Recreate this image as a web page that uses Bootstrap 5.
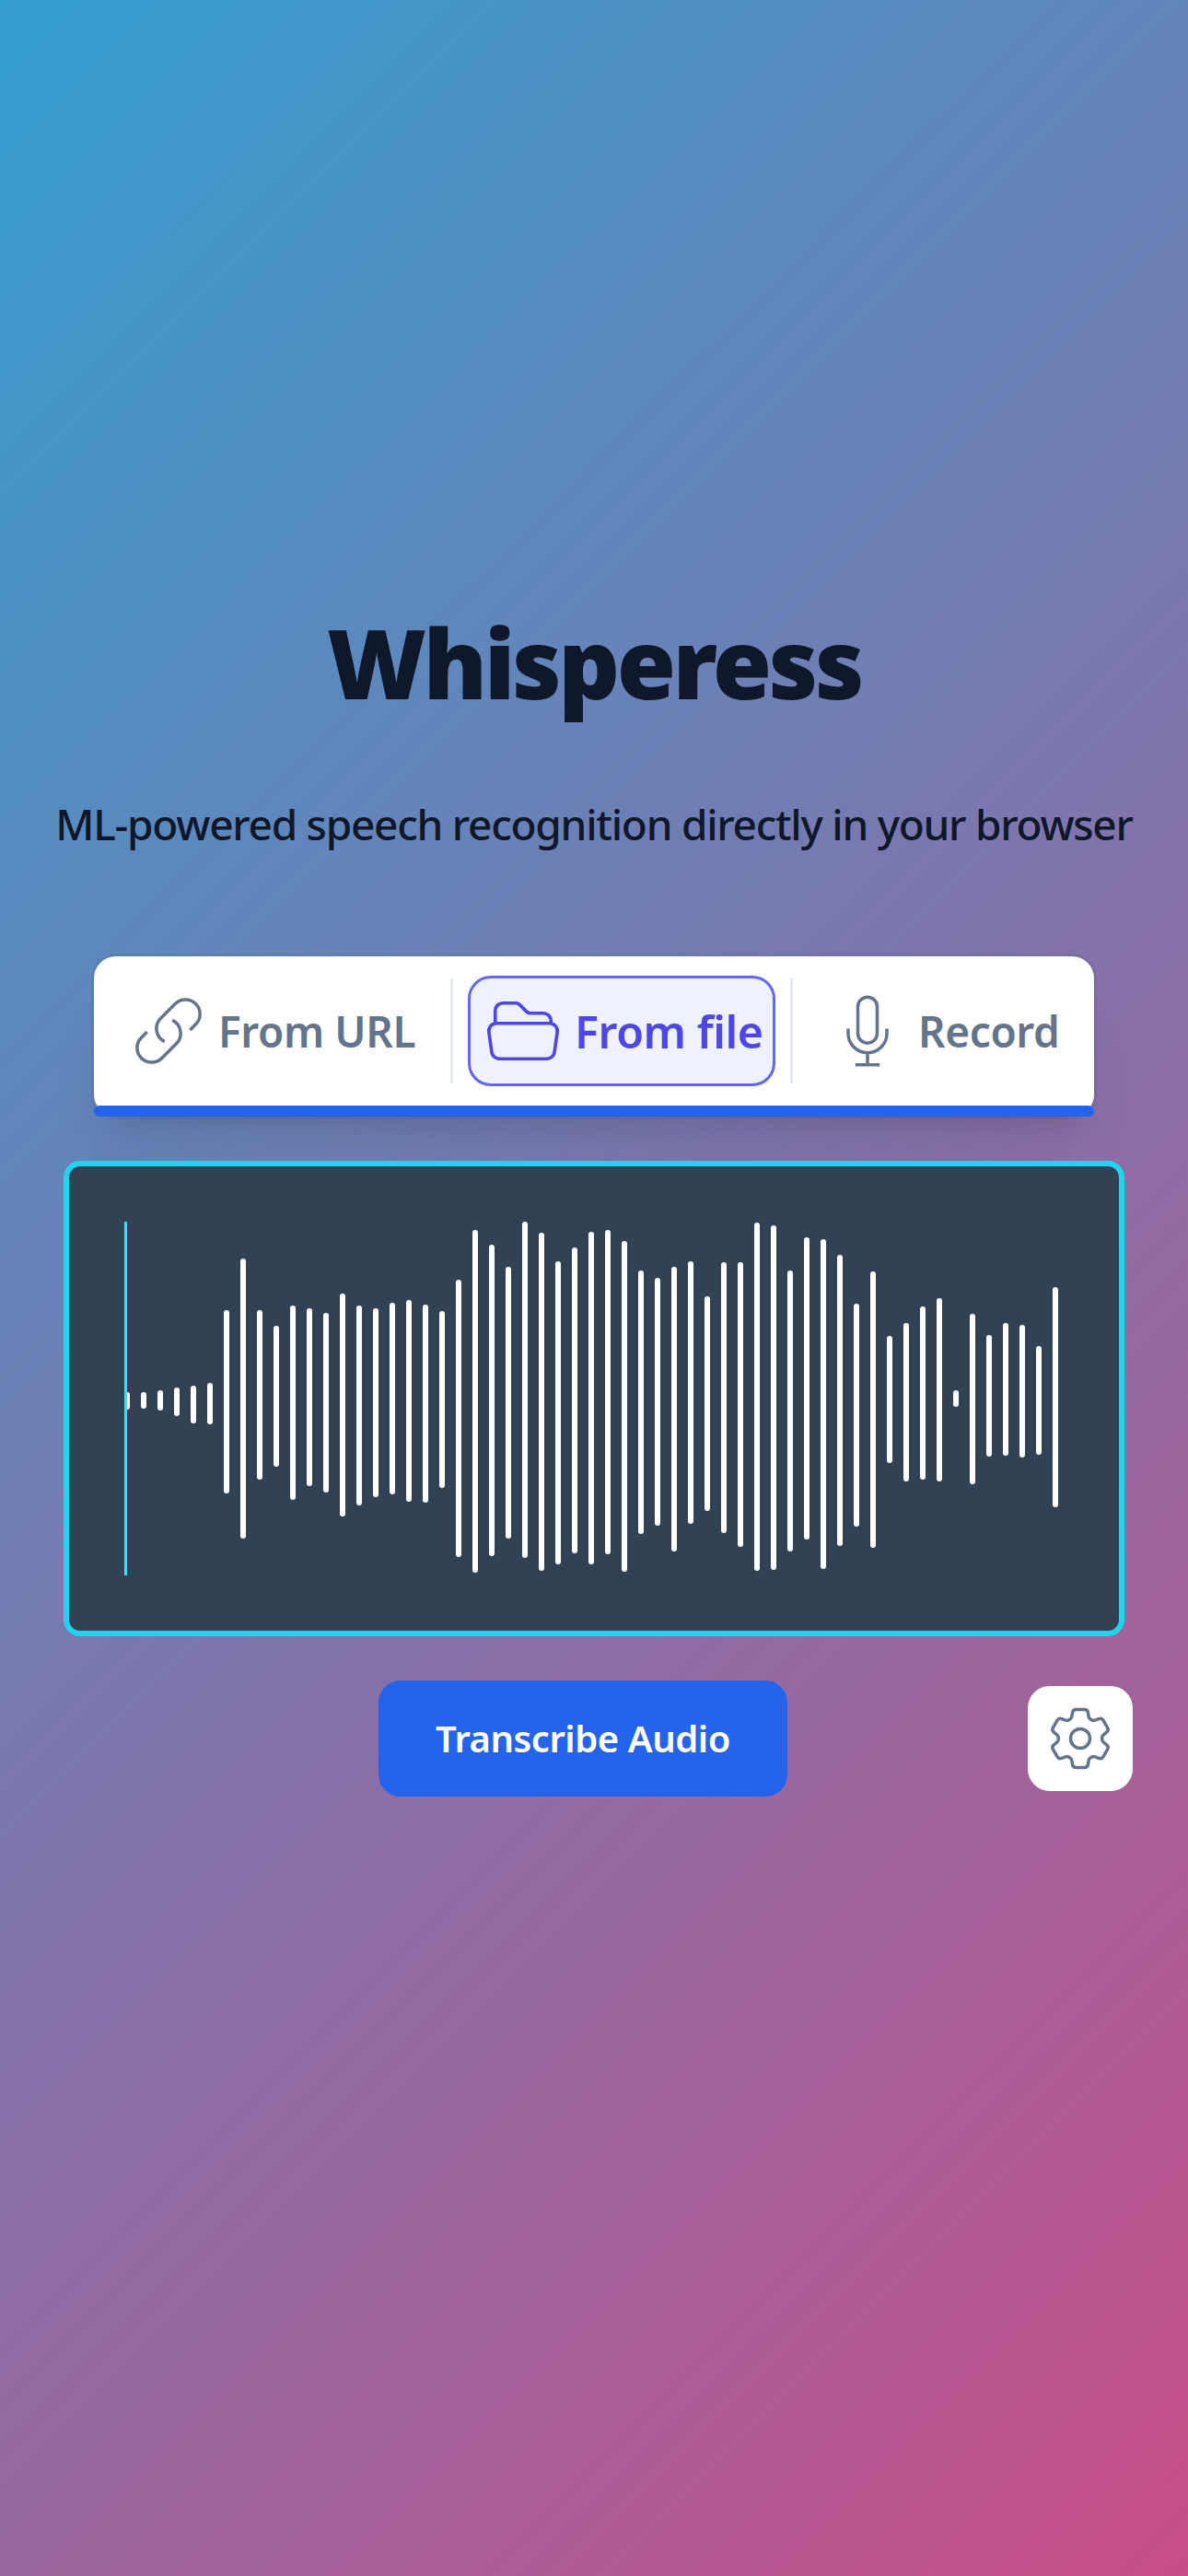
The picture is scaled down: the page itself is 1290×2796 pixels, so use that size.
<!DOCTYPE html>
<html lang="en">
<head>
<meta charset="utf-8">
<meta name="viewport" content="width=device-width, initial-scale=1">
<title>Whisperess</title>
<link rel="stylesheet" href="https://cdn.jsdelivr.net/npm/bootstrap@5.3.0/dist/css/bootstrap.min.css">
<style>
  body {
    font-family: "Segoe UI", "Noto Sans", "Open Sans", sans-serif;
    color: #0f172a;
    background: linear-gradient(135deg, #349fd1, #c84d88) no-repeat;
    min-height: 2796px;
  }
  .page { padding-top: 664px; }
  .app-title { font-size: 104px; font-weight: 900; line-height: 110px; letter-spacing: -3.5px; margin-bottom: 84px; }
  .tagline { font-size: 46px; font-weight: 500; line-height: 72px; letter-spacing: -1.27px; margin-bottom: 108px; }
  .source-bar {
    width: 1086px; height: 174px; padding: 24px 0 36px; border-radius: 24px;
    box-shadow: 0 0 0 3px rgba(51,65,85,.1), 0 60px 75px -15px rgba(0,0,0,.06), 0 24px 30px -18px rgba(0,0,0,.1);
  }
  .progress-line { height: 12px; border-radius: 6px; background: #2563eb; }
  .source-tab { color: #64748b; font-size: 46px; font-weight: 600; letter-spacing: -.4px; line-height: 1; }
  .tab-url { width: 387px; padding-left: 39px; gap: 12px; }
  .tab-file { width: 366px; }
  .tab-record { width: 327px; padding-left: 39px; gap: 13px; }
  .tab-pill {
    width: 334px; height: 120px; padding-left: 13px; gap: 12px; border: 3px solid #6366f1;
    border-radius: 25px; background: #eef2ff; color: #4f46e5; font-size: 48.5px; letter-spacing: -.5px;
  }
  .separator { width: 3px; background: #e2e8f0; }
  .glyph { width: 84px; height: 84px; flex: none; fill: none; stroke: currentColor; stroke-width: 1; }
  .tab-pill .glyph { width: 88px; height: 88px; }
  .wave-panel {
    width: 1152px; height: 516px; margin: 48px 0; padding: 60px; border: 6px solid #22d3ee;
    border-radius: 18px; background: #334155;
  }
  .wave { display: block; width: 1020px; height: 384px; }
  .action-row { margin: 0 60px 0 36px; }
  .btn-transcribe {
    --bs-btn-color: #fff; --bs-btn-bg: #2563eb; --bs-btn-hover-color: #fff; --bs-btn-hover-bg: #1d4ed8;
    width: 444px; height: 126px; padding: 0; border: 0; border-radius: 24px;
    font-size: 40px; font-weight: 600; letter-spacing: -.45px;
  }
  .btn-settings { width: 114px; height: 114px; border: 0; border-radius: 24px; --bs-btn-bg: #fff; --bs-btn-color: #64748b; }
</style>
</head>
<body>
<main class="page d-flex flex-column align-items-center text-center text-nowrap">
  <h1 class="app-title">Whisperess</h1>
  <h2 class="tagline">ML-powered speech recognition directly in your browser</h2>

  <nav class="source-bar bg-white position-relative d-flex">
    <div class="source-tab tab-url d-flex align-items-center">
      <svg class="glyph" viewBox="0 0 24 24"><path d="M13.19 8.688a4.5 4.5 0 011.242 7.244l-4.5 4.5a4.5 4.5 0 01-6.364-6.364l1.757-1.757m13.35-.622l1.757-1.757a4.5 4.5 0 00-6.364-6.364l-4.5 4.5a4.5 4.5 0 001.242 7.244"/></svg>
      <span>From URL</span>
    </div>
    <div class="separator"></div>
    <div class="tab-file d-flex align-items-center justify-content-center">
      <div class="source-tab tab-pill d-flex flex-shrink-0 align-items-center">
        <svg class="glyph" viewBox="0 0 24 24"><path d="M3.75 9.776c.112-.017.227-.026.344-.026h15.812c.117 0 .232.009.344.026m-16.5 0a2.25 2.25 0 00-1.883 2.542l.857 6a2.25 2.25 0 002.227 1.932H19.05a2.25 2.25 0 002.227-1.932l.857-6a2.25 2.25 0 00-1.883-2.542m-16.5 0V6A2.25 2.25 0 016 3.75h3.879a1.5 1.5 0 011.06.44l2.122 2.12a1.5 1.5 0 001.06.44H18A2.25 2.25 0 0120.25 9v.776"/></svg>
        <span>From file</span>
      </div>
    </div>
    <div class="separator"></div>
    <div class="source-tab tab-record d-flex align-items-center">
      <svg class="glyph" viewBox="0 0 24 24"><path d="M12 18.75a6 6 0 006-6v-1.5m-6 7.5a6 6 0 01-6-6v-1.5m6 7.5v3.75m-3.75 0h7.5M12 15.75a3 3 0 01-3-3V4.5a3 3 0 116 0v8.25a3 3 0 01-3 3z"/></svg>
      <span>Record</span>
    </div>
    <div class="progress-line position-absolute start-0 bottom-0 w-100"></div>
  </nav>

  <section class="wave-panel position-relative">
    <svg class="wave" viewBox="0 0 1020 384">
      <g id="bars" fill="#fff"></g>
      <rect width="3" height="384" fill="#0ff"/>
    </svg>
  </section>

  <div class="action-row d-flex align-items-center align-self-stretch">
    <div class="col"></div>
    <button class="btn btn-transcribe flex-shrink-0" type="button">Transcribe Audio</button>
    <div class="col d-flex justify-content-end">
      <button class="btn btn-settings p-0 d-flex align-items-center justify-content-center" type="button" aria-label="Settings">
        <svg class="glyph" viewBox="0 0 24 24" stroke-linecap="round" stroke-linejoin="round"><path d="M9.594 3.94c.09-.542.56-.94 1.11-.94h2.593c.55 0 1.02.398 1.11.94l.213 1.281c.063.374.313.686.645.87.074.04.147.083.22.127.324.196.72.257 1.075.124l1.217-.456a1.125 1.125 0 011.37.49l1.296 2.247a1.125 1.125 0 01-.26 1.431l-1.003.827c-.293.24-.438.613-.431.992a6.759 6.759 0 010 .255c-.007.378.138.75.43.99l1.005.828c.424.35.534.954.26 1.43l-1.298 2.247a1.125 1.125 0 01-1.369.491l-1.217-.456c-.355-.133-.75-.072-1.076.124a6.57 6.57 0 01-.22.128c-.331.183-.581.495-.644.869l-.213 1.28c-.09.543-.56.941-1.11.941h-2.594c-.55 0-1.02-.398-1.11-.94l-.213-1.281c-.062-.374-.312-.686-.644-.87a6.52 6.52 0 01-.22-.127c-.325-.196-.72-.257-1.076-.124l-1.217.456a1.125 1.125 0 01-1.369-.49l-1.297-2.247a1.125 1.125 0 01.26-1.431l1.004-.827c.292-.24.437-.613.43-.992a6.932 6.932 0 010-.255c.007-.378-.138-.75-.43-.99l-1.004-.828a1.125 1.125 0 01-.26-1.43l1.297-2.247a1.125 1.125 0 011.37-.491l1.216.456c.356.133.751.072 1.076-.124.072-.044.146-.087.22-.128.332-.183.582-.495.644-.869l.214-1.281z"/><path d="M15 12a3 3 0 11-6 0 3 3 0 016 0z"/></svg>
      </button>
    </div>
  </div>
</main>
<script src="https://cdn.jsdelivr.net/npm/bootstrap@5.3.0/dist/js/bootstrap.bundle.min.js"></script>
<script>
  // Top and bottom edge of each peak in the waveform
  const peaks = [
    [185,204],[185,203],[183,205],[180,211],[178,219],[175,220],[96,295],[40,344],[96,280],[113,266],
    [91,302],[94,287],[99,294],[78,320],[91,308],[94,299],[88,296],[85,304],[90,305],[97,289],
    [63,364],[9,381],[25,363],[49,344],[0,365],[12,379],[43,372],[28,360],[11,372],[9,361],
    [21,380],[53,339],[61,330],[49,358],[43,328],[81,314],[44,338],[44,353],[1,379],[4,378],
    [53,358],[17,345],[19,377],[36,352],[89,331],[54,354],[124,262],[110,282],[92,280],[83,282],
    [183,201],[100,285],[123,255],[110,254],[112,256],[135,253],[71,310]
  ];
  document.getElementById("bars").innerHTML = peaks.map(([top, bottom], i) =>
    `<rect x="${i * 18}" y="${top}" width="6" height="${bottom - top}" rx="3"/>`).join("");
</script>
</body>
</html>
